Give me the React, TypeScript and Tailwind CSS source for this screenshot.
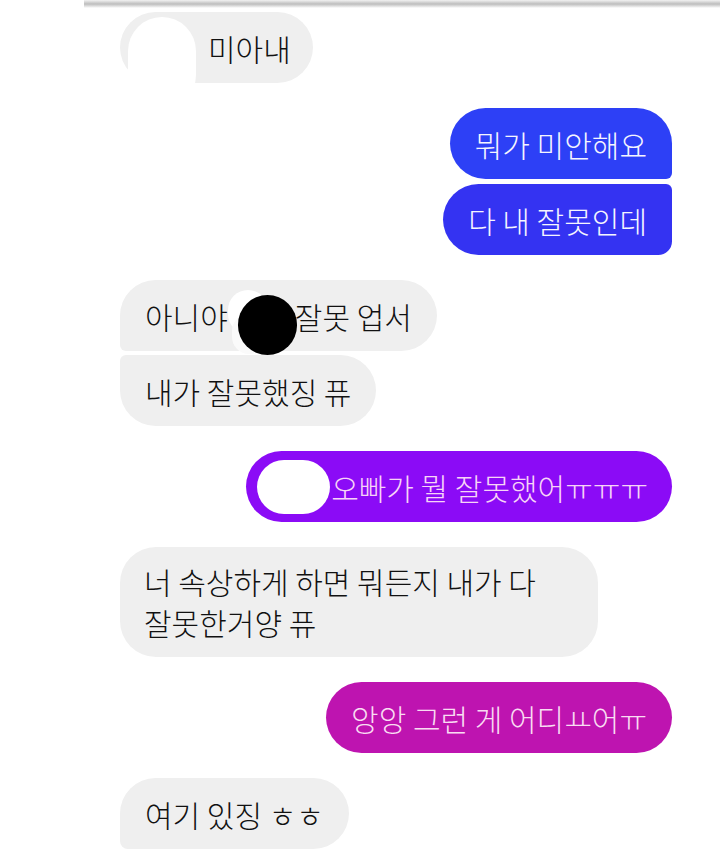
const font = { fontFamily: '"Noto Sans CJK KR", "Noto Sans", sans-serif' };

function Bubble({
  className,
  children,
}: {
  className: string;
  children: React.ReactNode;
}) {
  return (
    <div className={`relative flex h-[71px] items-center text-[30px] font-light leading-none whitespace-nowrap ${className}`}>
      {children}
    </div>
  );
}

export default function App() {
  return (
    <div
      className="relative h-[852px] w-[720px] overflow-hidden bg-white text-[#111]"
      style={font}
    >
      {/* top strip */}
      <div className="ml-[84px] h-[8px] bg-gradient-to-b from-[#f2f2f2] via-[#bdbdbd] to-white" />

      <div className="flex flex-col pl-[120px] pr-[48px] pt-[4px]">
        {/* 1 */}
        <div className="flex justify-start">
          <Bubble className="rounded-full bg-[#efefef] pl-[88px] pr-[22px]">
            <div className="absolute left-[8px] top-[5px] h-[92px] w-[68px] rounded-[34px] bg-white" />
            <span className="relative">미아내</span>
          </Bubble>
        </div>

        {/* 2, 3 */}
        <div className="mt-[25px] flex flex-col items-end gap-[5px]">
          <Bubble className="rounded-l-[36px] rounded-tr-[36px] rounded-br-[6px] bg-[#2d40f6] px-[25px] text-[#f5f5ff]">
            <span>뭐가 미안해요</span>
          </Bubble>
          <Bubble className="rounded-l-[36px] rounded-tr-[6px] rounded-br-[14px] bg-[#3433f2] px-[25px] text-[#f5f5ff]">
            <span>다 내 잘못인데</span>
          </Bubble>
        </div>

        {/* 4, 5 */}
        <div className="mt-[25px] flex flex-col items-start gap-[4px]">
          <Bubble className="z-10 rounded-r-[36px] rounded-tl-[36px] rounded-bl-[6px] bg-[#efefef] pl-[25px] pr-[25px]">
            <span>아니야</span>
            <span className="inline-block w-[67px]" />
            <span>잘못 업서</span>
            <div className="absolute left-[108px] top-[10px] h-[44px] w-[40px] rounded-full bg-white" />
            <div className="absolute left-[112px] top-[34px] h-[40px] w-[34px] rounded-full bg-[#fafafa]" />
            <div className="absolute left-[118px] top-[15px] h-[60px] w-[59px] rounded-full bg-black" />
          </Bubble>
          <Bubble className="rounded-r-[36px] rounded-tl-[6px] rounded-bl-[36px] bg-[#efefef] px-[25px]">
            <span>내가 잘못했징 퓨</span>
          </Bubble>
        </div>

        {/* 6 */}
        <div className="mt-[25px] flex justify-end">
          <Bubble className="rounded-full bg-[#8b0bf6] pl-[11px] pr-[24px] text-[#f7d4f7]">
            <span className="mr-[1px] inline-block h-[54px] w-[73px] rounded-full bg-white" />
            <span>오빠가 뭘 잘못했어ㅠㅠㅠ</span>
          </Bubble>
        </div>

        {/* 7 */}
        <div className="mt-[25px] flex justify-start">
          <div className="w-[478px] rounded-[36px] bg-[#efefef] px-[24px] py-[14px] text-[30px] font-light leading-[41px] break-keep">
            너 속상하게 하면 뭐든지 내가 다 잘못한거양 퓨
          </div>
        </div>

        {/* 8 */}
        <div className="mt-[25px] flex justify-end">
          <Bubble className="rounded-full bg-[#be14b0] px-[25px] text-[#f9dcf2]">
            <span>앙앙 그런 게 어디ㅛ어ㅠ</span>
          </Bubble>
        </div>

        {/* 9 */}
        <div className="mt-[25px] flex justify-start">
          <Bubble className="rounded-r-[36px] rounded-tl-[36px] rounded-bl-[8px] bg-[#efefef] px-[25px]">
            <span>여기 있징 ㅎㅎ</span>
          </Bubble>
        </div>
      </div>
    </div>
  );
}
